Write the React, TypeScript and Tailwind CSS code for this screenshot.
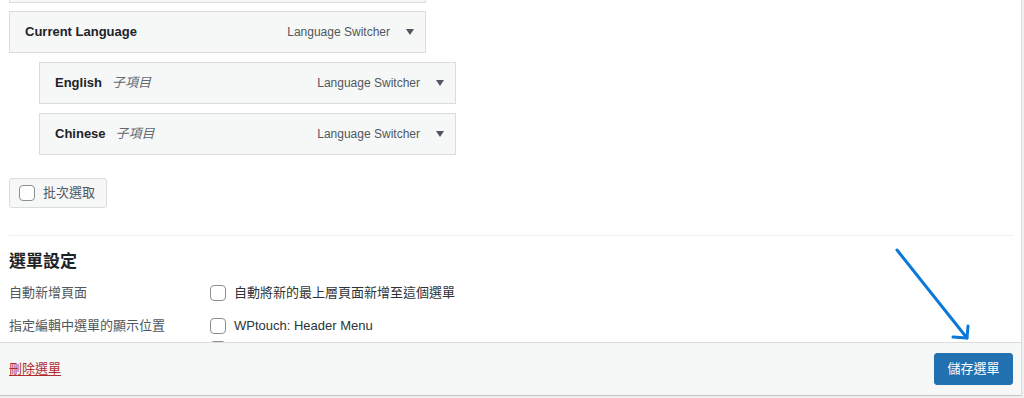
import React from "react";

const font = { fontFamily: '"Liberation Sans", Arial, "Noto Sans CJK TC", sans-serif' };

function Tri() {
  return (
    <svg width="10" height="8" viewBox="0 0 10 8" className="ml-[15px] mr-[10px]">
      <path d="M1 1 L9 1 L5 7 Z" fill="#50575e" />
    </svg>
  );
}

function Item({ title, sub }: { title: string; sub?: string }) {
  return (
    <div className="w-[417px] h-[42px] bg-[#f6f7f7] border border-[#dcdcde] flex items-center pl-[15px]">
      <span className="text-[13px] font-bold text-[#1d2327]">{title}</span>
      {sub && <span className="ml-[10px] text-[13px] italic text-[#646970]">{sub}</span>}
      <span className="ml-auto text-[12px] text-[#50575e]">Language Switcher</span>
      <Tri />
    </div>
  );
}

function Box() {
  return <span className="inline-block w-[16px] h-[16px] border border-[#8c8f94] rounded-[4px] bg-white" />;
}

export default function App() {
  return (
    <div className="w-[1024px] h-[398px] overflow-hidden bg-[#f0f0f1] relative" style={font}>
      <div className="w-[1022px] h-[396px] bg-white border-r border-[#dcdcde] border-b border-b-[#c3c4c7] flex flex-col overflow-hidden">
        <div className="pl-[9px] pr-[8px] flex-1 overflow-hidden">
          <div className="w-[417px] h-[42px] mt-[-39px] bg-[#f6f7f7] border border-[#dcdcde]" />
          <div className="mt-[8px]">
            <Item title="Current Language" />
          </div>
          <div className="ml-[30px] mt-[9px]">
            <Item title="English" sub="子項目" />
          </div>
          <div className="ml-[30px] mt-[9px]">
            <Item title="Chinese" sub="子項目" />
          </div>
          <div className="mt-[23px] w-[98px] h-[30px] bg-[#f6f7f7] border border-[#dcdcde] rounded-[3px] flex items-center pl-[9px] gap-[8px]">
            <Box />
            <span className="text-[13px] text-[#50575e]">批次選取</span>
          </div>
          <div className="mt-[27px] h-px bg-[#f0f0f1] w-[1005px]" />
          <div className="mt-[15px] text-[17px] font-bold text-[#1d2327] leading-[22px]">選單設定</div>
          <div className="mt-[11px] flex items-center h-[18px]">
            <span className="w-[201px] text-[13px] text-[#50575e]">自動新增頁面</span>
            <Box />
            <span className="ml-[8px] text-[13px] text-[#2c3338]">自動將新的最上層頁面新增至這個選單</span>
          </div>
          <div className="mt-[15px] flex items-center h-[18px]">
            <span className="w-[201px] text-[13px] text-[#50575e]">指定編輯中選單的顯示位置</span>
            <Box />
            <span className="ml-[8px] text-[13px] text-[#2c3338]">WPtouch: Header Menu</span>
          </div>
          <div className="mt-[5px] ml-[201px]">
            <Box />
          </div>
        </div>
        <div className="h-[53px] shrink-0 bg-[#f6f7f7] border-t border-[#dcdcde] flex items-center pl-[9px] pr-[8px]">
          <a className="text-[13px] text-[#b32d2e] underline underline-offset-2">刪除選單</a>
          <button className="ml-auto w-[79px] h-[32px] bg-[#2271b1] border border-[#2271b1] rounded-[3px] text-white text-[13px]">
            儲存選單
          </button>
        </div>
      </div>
      <svg className="absolute left-0 top-0 pointer-events-none" width="1024" height="398">
        <g stroke="#0b78d8" strokeWidth="3" strokeLinecap="round" fill="none">
          <line x1="897" y1="250" x2="967" y2="338" />
          <polyline points="953,337 967,338 968,326" strokeLinejoin="round" />
        </g>
      </svg>
    </div>
  );
}
